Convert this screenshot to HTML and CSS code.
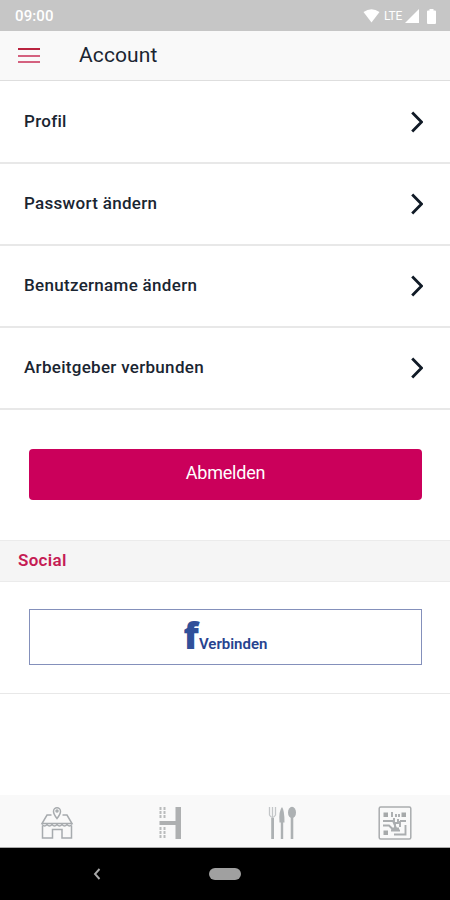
FILE: index.html
```html
<!DOCTYPE html>
<html lang="de">
<head>
<meta charset="utf-8">
<title>Account</title>
<link rel="stylesheet" href="styles.css">
</head>
<body>
<div class="screen">
  <div class="status">
    <span class="time">09:00</span>
    <div class="signals">
      <svg width="17" height="14" viewBox="0 0 17 14"><path d="M.5 3Q8.500-2.500 16.500 3L8.500 13.500Z" fill="#fff"/></svg>
      <span class="lte">LTE</span>
      <svg width="14" height="14" viewBox="0 0 14 14"><path d="M14 0V14H0Z" fill="#fff"/></svg>
      <svg class="battery" width="9" height="15" viewBox="0 0 9 15"><path d="M2.500 0h4v1.500H8a1 1 0 0 1 1 1V14a1 1 0 0 1-1 1H1a1 1 0 0 1-1-1V2.500a1 1 0 0 1 1-1h1.500Z" fill="#fff"/></svg>
    </div>
  </div>
  <header class="header">
    <svg width="22" height="16" viewBox="0 0 22 16"><path d="M0 1h22" stroke="#b9233f" stroke-width="2"/><path d="M0 8h22M0 14h22" stroke="#d4617f" stroke-width="2"/></svg>
    <h1>Account</h1>
  </header>
  <main>
    <div class="row"><span>Profil</span><svg class="chevron" viewBox="0 0 12 22"><path d="M1.200 1.500L10.500 11L1.200 20.500"/></svg></div>
    <div class="row"><span>Passwort ändern</span><svg class="chevron" viewBox="0 0 12 22"><path d="M1.200 1.500L10.500 11L1.200 20.500"/></svg></div>
    <div class="row"><span>Benutzername ändern</span><svg class="chevron" viewBox="0 0 12 22"><path d="M1.200 1.500L10.500 11L1.200 20.500"/></svg></div>
    <div class="row"><span>Arbeitgeber verbunden</span><svg class="chevron" viewBox="0 0 12 22"><path d="M1.200 1.500L10.500 11L1.200 20.500"/></svg></div>
    <div class="logout"><button class="primary">Abmelden</button></div>
    <h2 class="section">Social</h2>
    <div class="social"><button class="facebook"><span class="fb">f</span><span class="fblabel">Verbinden</span></button></div>
  </main>
  <nav class="tabs">
    <div class="tab"><svg width="34" height="34" viewBox="0 0 34 34" fill="none" stroke="#a7abae" stroke-width="1.500"><path d="M17 12.500C15 10 13.500 7.500 13.500 5.200a3.500 3.500 0 0 1 7 0C20.500 7.500 19 10 17 12.500Z"/><circle cx="17" cy="5" r="1"/><path d="M11.500 9H7L2 17.500H32L27 9H22.500"/><path d="M2 18.500q2.500 3 5 0q2.500 3 5 0q2.500 3 5 0q2.500 3 5 0q2.500 3 5 0q2.500 3 5 0"/><path d="M2.500 20V32H12.500V23.500H22V32H31.500V20"/></svg></div>
    <div class="tab"><svg width="34" height="34" viewBox="0 0 34 34"><path d="M22.500 1h5.500v32h-5.500ZM6.500 15h17v4h-17Z" fill="#aeb0b1"/><path d="M7.500 1V13M11.500 1V13M7.500 21V33M11.500 21V33" stroke="#b9bbbc" stroke-width="2" stroke-dasharray="3 1"/></svg></div>
    <div class="tab"><svg width="34" height="34" viewBox="0 0 34 34" fill="#adb1b3"><path d="M6.200 12h2.800V33H6.200Z"/><path d="M4.500 1V9Q7.500 14 10.500 9V1M7.500 1v10" fill="none" stroke="#c3c6c8" stroke-width="1.300"/><path d="M17 1Q13.500 5 14.500 16.500h1.300V33h2.400V16.500h1.300Q19.500 4 17 1Z"/><ellipse cx="27" cy="6.500" rx="4" ry="5.800"/><path d="M25.700 12h2.600V33h-2.600Z"/></svg></div>
    <div class="tab"><svg width="34" height="34" viewBox="0 0 34 34" fill="none" stroke="#aaadaf" stroke-width="1.500"><rect x="1.200" y="1" width="31.600" height="32" rx="1.500"/><g fill="#a6a9aa" stroke="none"><path d="M5.500 6.500h4.500V11H5.500ZM23.500 6.500H28V11h-4.500ZM5.500 24.500H10V29H5.500Z"/></g><path d="M14 6V11M18 8v3M21 8v3M5 15h10L18 22M16 12v5h4V13M22 15h6M5 19.500h6l3 3h7M17 17v8M22 15v6M27.500 19v9.500H16M13 24.500H22" stroke-width="1.900"/></svg></div>
  </nav>
  <div class="system">
    <svg class="back" width="8" height="12" viewBox="0 0 8 12"><path d="M6.500 1L2 6l4.500 5" fill="none" stroke="#aaa" stroke-width="1.900"/></svg>
    <span class="pill"></span>
  </div>
</div>
</body>
</html>
```
FILE: styles.css
```css
* { box-sizing: border-box; }
body { margin: 0; background: #fff; color: #1a2531; font-family: Roboto, "Liberation Sans", sans-serif; }
.screen { display: flex; flex-direction: column; width: 450px; height: 900px; overflow: hidden; }
.status { display: flex; justify-content: space-between; height: 31px; padding: 1px 14px 0 15px; align-items: center; background: #c6c6c6; color: #fff; }
.time { font-size: 15px; font-weight: 500; letter-spacing: .1px; }
.signals { display: flex; align-items: center; }
.lte { margin: 0 3px 0 4px; font-size: 12px; letter-spacing: -.3px; }
.battery { margin-left: 8px; }
.header { display: flex; align-items: center; height: 50px; padding-left: 18px; background: #f9f9f9; border-bottom: 1px solid #dedede; }
h1 { margin: 0 0 2px 39px; font-size: 21px; font-weight: 400; letter-spacing: .1px; }
main { flex: 1; padding-top: 1px; }
.row { display: flex; justify-content: space-between; height: 82px; padding: 0 27px 3px 24px; align-items: center; border-bottom: 2px solid #e8e8e8; font-size: 17px; font-weight: 500; letter-spacing: .3px; }
.chevron { width: 12px; height: 22px; fill: none; stroke: #101a26; stroke-width: 2.8; margin-top: 2px; }
.logout { height: 130px; padding: 39px 28px 0 29px; }
button { display: block; width: 100%; font-family: inherit; }
.primary { height: 51px; border: 0; border-radius: 4px; padding: 0 0 5px; background: #cb005b; color: #fff; font-size: 18px; letter-spacing: -.2px; }
.section { margin: 0; height: 42px; padding-left: 18px; line-height: 38px; border: solid #ebebeb; border-width: 1px 0; background: #f5f5f5; color: #c51c54; font-size: 17px; font-weight: 600; letter-spacing: .3px; }
.social { height: 112px; padding: 27px 28px 0 29px; border-bottom: 1px solid #e8e8e8; }
.facebook { display: flex; justify-content: center; align-items: baseline; height: 56px; padding: 0; border: 1.500px solid #8490bb; background: #fff; color: #27438f; }
.fb { font: 800 37px/50px "Open Sans", sans-serif; color: #30509a; }
.fblabel { font-size: 15px; font-weight: 600; }
.tabs { display: grid; grid-template-columns: repeat(4, 1fr); height: 53px; background: #f9f9f9; border-bottom: 1px solid #aaa; }
.tab { display: flex; justify-content: center; align-items: center; padding: 4px 0 0 2px; }
.system { display: grid; grid-template-columns: 1fr 32px 1fr; align-items: center; height: 52px; background: #000; }
.back { margin-left: 93px; }
.pill { height: 12px; border-radius: 6px; background: #a0a0a0; }
```
